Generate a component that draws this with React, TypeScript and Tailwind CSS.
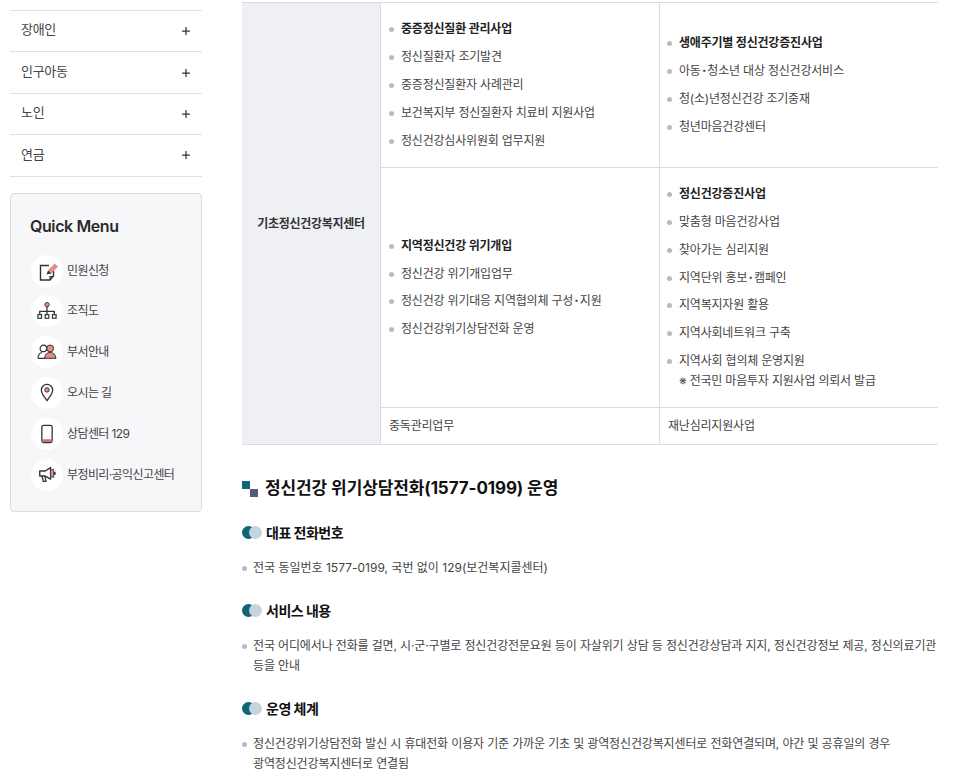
import React from 'react';
import { Plus } from 'lucide-react';

const font = { fontFamily: 'Inter, "Noto Sans CJK KR", sans-serif' };

const sideMenu = ['장애인', '인구아동', '노인', '연금'];

const IconWrite = () => (
  <svg width="24" height="24" viewBox="0 0 24 24" fill="none">
    <path d="M14 6.500H5.500V21H15l3.500-4v-5" stroke="#333" strokeWidth="1.400" />
    <path d="M15 21v-3.500h3.500" stroke="#333" strokeWidth="1.200" />
    <path d="M13 11.500l6.500-7 3.500 3-6.500 7z" fill="#ea8a8a" />
    <path d="M13 11.500l-1.500 4 5-1z" fill="#333" />
  </svg>
);
const IconOrg = () => (
  <svg width="20" height="20" viewBox="0 0 22 22" fill="none">
    <circle cx="11" cy="4" r="2.400" fill="#ea8a8a" stroke="#333" strokeWidth="1" />
    <path d="M11 6.500V15M3 15v-3.500h16V15" stroke="#333" strokeWidth="1.400" />
    <rect x="1" y="15" width="4" height="4" stroke="#333" strokeWidth="1.300" />
    <rect x="9" y="15" width="4" height="4" stroke="#333" strokeWidth="1.300" />
    <rect x="17" y="15" width="4" height="4" stroke="#333" strokeWidth="1.300" />
  </svg>
);
const IconPeople = () => (
  <svg width="20" height="18" viewBox="0 0 22 20" fill="none">
    <circle cx="7" cy="6" r="3.600" stroke="#333" strokeWidth="1.300" />
    <path d="M1 17c0-4 2-6 4.500-6.500M1 17h8" stroke="#333" strokeWidth="1.300" />
    <circle cx="14.500" cy="6" r="3.800" fill="#ea8a8a" stroke="#333" strokeWidth="1.100" />
    <path d="M8.500 17c0-4 2.500-6.500 6-6.500s6 2.500 6.500 6.500z" fill="#ea8a8a" stroke="#333" strokeWidth="1.100" />
  </svg>
);
const IconPin = () => (
  <svg width="14" height="19" viewBox="0 0 16 22" fill="none">
    <path d="M8 20.500C5 16 1.500 12.500 1.500 8a6.500 6.500 0 0 1 13 0c0 4.500-3.500 8-6.500 12.500z" stroke="#333" strokeWidth="1.500" />
    <circle cx="8" cy="8" r="2.600" fill="#ea8a8a" stroke="#333" strokeWidth="1.100" />
  </svg>
);
const IconPhone = () => (
  <svg width="12" height="20" viewBox="0 0 14 22" fill="none">
    <rect x="1" y="1" width="12" height="20" rx="2" stroke="#333" strokeWidth="1.500" />
    <path d="M1.800 17h10.400v2.200a1 1 0 0 1-1 1H2.800a1 1 0 0 1-1-1z" fill="#d9706f" />
  </svg>
);
const IconMegaphone = () => (
  <svg width="19" height="17" viewBox="0 0 24 22" fill="none">
    <path d="M2 6.500h7L16 2v15l-7-4H2z" fill="#fff" stroke="#333" strokeWidth="1.800" strokeLinejoin="round" />
    <path d="M5 13l1.500 7H10l-1.500-7" stroke="#333" strokeWidth="1.700" />
    <path d="M16 5.500l4-1.500v11l-4-1.500z" fill="#ea8a8a" stroke="#333" strokeWidth="1" />
    <path d="M20 7.500h2.500v4H20" fill="#333" />
  </svg>
);

const quickMenu: { label: string; icon: React.ReactNode }[] = [
  { label: '민원신청', icon: <IconWrite /> },
  { label: '조직도', icon: <IconOrg /> },
  { label: '부서안내', icon: <IconPeople /> },
  { label: '오시는 길', icon: <IconPin /> },
  { label: '상담센터 129', icon: <IconPhone /> },
  { label: '부정비리·공익신고센터', icon: <IconMegaphone /> },
];

const Dot = () => <span className="absolute left-0 top-[8px] w-[5px] h-[5px] rounded-full bg-[#bbbbbb]" />;

// 표 안의 가운뎃점은 조금 굵고 넓다
const withMidDot = (t: string) =>
  t.split('·').map((part, i) => (
    <React.Fragment key={i}>
      {i > 0 && <span className="font-black mx-[1.200px]">·</span>}
      {part}
    </React.Fragment>
  ));

const Cell = ({ title, items, note, wide }: { title: string; items: string[]; note?: string; wide?: boolean }) => (
  <ul className={`flex flex-col ${wide ? 'gap-[8px]' : 'gap-[7.800px]'} text-[12px] leading-[20px] tracking-[-0.2px] text-[#444]`}>
    <li className="relative pl-[12px] font-bold text-[#222]"><Dot />{title}</li>
    {items.map((t) => (
      <li key={t} className="relative pl-[12px]"><Dot />{withMidDot(t)}</li>
    ))}
    {note && (
      <li className="relative pl-[12px] -mt-[8px]">※ {note}</li>
    )}
  </ul>
);

const SubHead = ({ children }: { children: React.ReactNode }) => (
  <div className="flex items-center gap-[5px] h-[20px]">
    <span className="relative w-[19px] h-[13px] shrink-0">
      <span className="absolute left-0 top-0 w-[13px] h-[13px] rounded-full bg-[#0f6475]" />
      <span className="absolute left-[7px] top-0 w-[13px] h-[13px] rounded-full bg-[#c3d6dd]" />
    </span>
    <span className="text-[14px] font-bold text-[#111] tracking-[-0.5px]">{children}</span>
  </div>
);

const Para = ({ children, tight }: { children: React.ReactNode; tight?: boolean }) => (
  <p className={`relative pl-[11px] text-[12px] leading-[20px] text-[#444] break-keep ${tight ? 'tracking-[-0.14px]' : ''}`}>
    <span className="absolute left-0 top-[8px] w-[5px] h-[5px] rounded-full bg-[#bbbbbb]" />
    {children}
  </p>
);

export default function App() {
  return (
    <div className="w-[956px] h-[780px] overflow-hidden bg-white flex" style={font}>
      <aside className="w-[192px] ml-[10px] mt-[10px] shrink-0">
        <ul className="border-t border-[#e2e2e2]">
          {sideMenu.map((m) => (
            <li key={m} className="h-[41.400px] border-b border-[#e2e2e2] pl-[11px] pr-[10px] flex items-center justify-between text-[13px] tracking-[-0.3px] text-[#444]">
              <span className="-mt-[2px]">{m}</span>
              <Plus size={12} strokeWidth={2.5} color="#333" />
            </li>
          ))}
        </ul>
        <div className="mt-[16px] h-[319px] rounded-[4px] border border-[#dcdce0] bg-[#f7f7fa] pl-[19px] pt-[21px]">
          <h2 className="text-[16px] leading-[22px] font-semibold text-[#2a2a2a] tracking-[-0.4px]">Quick Menu</h2>
          <ul className="mt-[18px] ml-[1px] flex flex-col gap-[8.800px]">
            {quickMenu.map((q) => (
              <li key={q.label} className="flex items-center gap-[4px] h-[32px]">
                <span className="w-[32px] h-[32px] rounded-full bg-white flex items-center justify-center shrink-0">{q.icon}</span>
                <span className="text-[12px] tracking-[-0.6px] text-[#444]">{q.label}</span>
              </li>
            ))}
          </ul>
        </div>
      </aside>

      <main className="ml-[40px] w-[696px] pt-[2px]">
        <div className="grid grid-cols-[138px_279px_279px] grid-rows-[164px_240px_37px] border-t border-b border-[#dcdcdc]">
          <div className="row-span-3 bg-[#eff0f4] flex items-center justify-center text-[12px] font-bold text-[#333] tracking-[-0.3px]">
            기초정신건강복지센터
          </div>
          <div className="border-l border-[#dcdcdc] pl-[8px] pb-[1px] flex flex-col justify-center">
            <Cell wide title="중증정신질환 관리사업" items={['정신질환자 조기발견', '중증정신질환자 사례관리', '보건복지부 정신질환자 치료비 지원사업', '정신건강심사위원회 업무지원']} />
          </div>
          <div className="border-l border-[#dcdcdc] pl-[7px] pb-[1px] flex flex-col justify-center">
            <Cell wide title="생애주기별 정신건강증진사업" items={['아동·청소년 대상 정신건강서비스', '청(소)년정신건강 조기중재', '청년마음건강센터']} />
          </div>
          <div className="border-l border-t border-[#dcdcdc] pl-[8px] flex flex-col justify-center">
            <Cell title="지역정신건강 위기개입" items={['정신건강 위기개입업무', '정신건강 위기대응 지역협의체 구성·지원', '정신건강위기상담전화 운영']} />
          </div>
          <div className="border-l border-t border-[#dcdcdc] pl-[7px] flex flex-col justify-center">
            <Cell title="정신건강증진사업" items={['맞춤형 마음건강사업', '찾아가는 심리지원', '지역단위 홍보·캠페인', '지역복지자원 활용', '지역사회네트워크 구축', '지역사회 협의체 운영지원']} note="전국민 마음투자 지원사업 의뢰서 발급" />
          </div>
          <div className="border-l border-t border-[#dcdcdc] pl-[8px] flex items-center text-[12px] tracking-[-0.2px] text-[#444]">중독관리업무</div>
          <div className="border-l border-t border-[#dcdcdc] pl-[8px] flex items-center text-[12px] tracking-[-0.2px] text-[#444]">재난심리지원사업</div>
        </div>

        <div className="mt-[33px] flex items-center gap-[7px] h-[22px]">
          <svg width="16" height="16" viewBox="0 0 16 16" className="shrink-0">
            <rect x="0" y="0" width="8" height="8" fill="#0f6475" />
            <rect x="8" y="8" width="8" height="8" fill="#525b7a" />
          </svg>
          <h3 className="text-[17px] font-bold text-[#111] tracking-[-0.1px]">정신건강 위기상담전화(1577-0199) 운영</h3>
        </div>

        <div className="mt-[22px]"><SubHead>대표 전화번호</SubHead></div>
        <div className="mt-[16px]"><Para>전국 동일번호 1577-0199, 국번 없이 129(보건복지콜센터)</Para></div>

        <div className="mt-[22px]"><SubHead>서비스 내용</SubHead></div>
        <div className="mt-[16px]"><Para tight>전국 어디에서나 전화를 걸면, 시·군·구별로 정신건강전문요원 등이 자살위기 상담 등 정신건강상담과 지지, 정신건강정보 제공, 정신의료기관 등을 안내</Para></div>

        <div className="mt-[22px]"><SubHead>운영 체계</SubHead></div>
        <div className="mt-[16px]"><Para tight>정신건강위기상담전화 발신 시 휴대전화 이용자 기준 가까운 기초 및 광역정신건강복지센터로 전화연결되며, 야간 및 공휴일의 경우 광역정신건강복지센터로 연결됨</Para></div>
      </main>
    </div>
  );
}
